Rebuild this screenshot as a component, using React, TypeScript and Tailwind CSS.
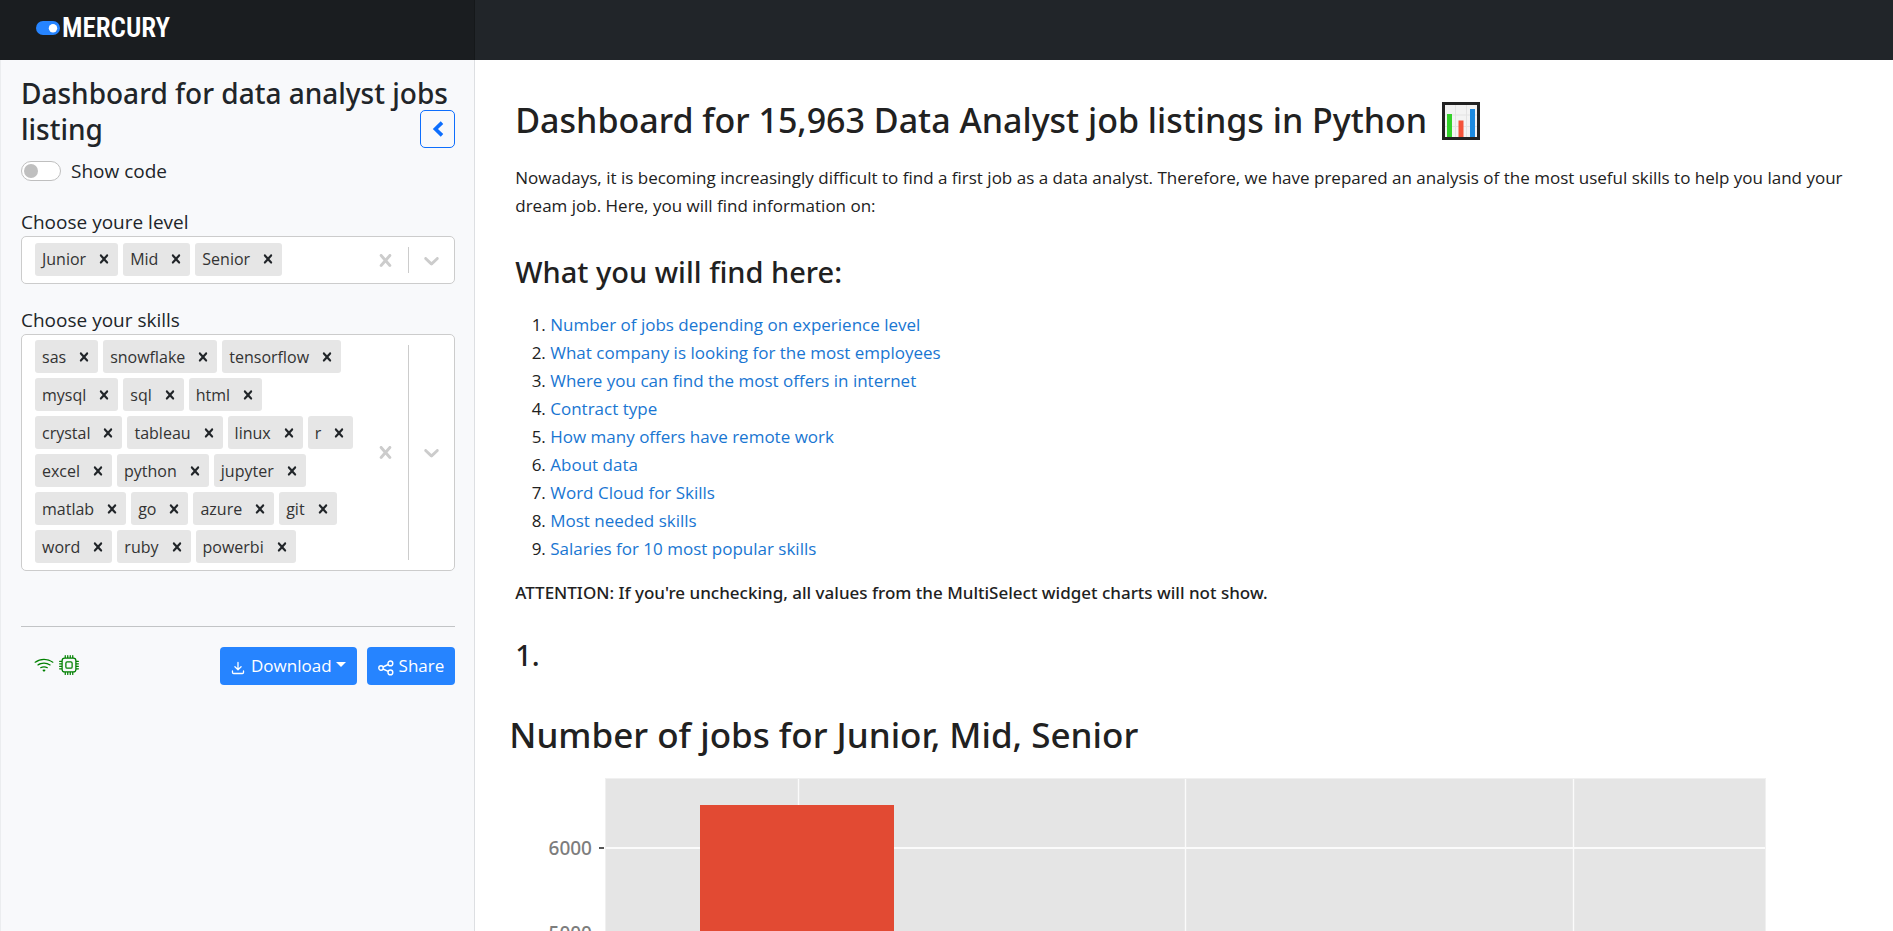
import { useState } from "react";
import { BsCpu, BsWifi } from "react-icons/bs";

const LEVELS = ["Junior", "Mid", "Senior"];

const SKILLS = [
  "sas", "snowflake", "tensorflow", "mysql", "sql", "html", "crystal",
  "tableau", "linux", "r", "excel", "python", "jupyter", "matlab", "go",
  "azure", "git", "word", "ruby", "powerbi",
];

const CONTENTS = [
  "Number of jobs depending on experience level",
  "What company is looking for the most employees",
  "Where you can find the most offers in internet",
  "Contract type",
  "How many offers have remote work",
  "About data",
  "Word Cloud for Skills",
  "Most needed skills",
  "Salaries for 10 most popular skills",
];

function CrossIcon({ className }: { className: string }) {
  return (
    <svg viewBox="0 0 20 20" className={className} fill="currentColor" aria-hidden="true">
      <path d="M14.348 14.849c-0.469 0.469-1.229 0.469-1.697 0l-2.651-3.030-2.651 3.029c-0.469 0.469-1.229 0.469-1.697 0-0.469-0.469-0.469-1.229 0-1.697l2.758-3.15-2.759-3.152c-0.469-0.469-0.469-1.228 0-1.697s1.228-0.469 1.697 0l2.652 3.031 2.651-3.031c0.469-0.469 1.228-0.469 1.697 0s0.469 1.229 0 1.697l-2.758 3.152 2.758 3.15c0.469 0.469 0.469 1.229 0 1.698z" />
    </svg>
  );
}

function DownIcon() {
  return (
    <svg viewBox="0 0 20 20" className="size-[25px]" fill="currentColor" aria-hidden="true">
      <path d="M4.516 7.548c0.436-0.446 1.043-0.481 1.576 0l3.908 3.747 3.908-3.747c0.533-0.481 1.141-0.446 1.574 0 0.436 0.445 0.408 1.197 0 1.615-0.406 0.418-4.695 4.502-4.695 4.502-0.217 0.223-0.502 0.335-0.787 0.335s-0.57-0.112-0.789-0.335c0 0-4.287-4.084-4.695-4.502s-0.436-1.17 0-1.615z" />
    </svg>
  );
}

function MultiSelect({ id, label, initial }: { id: string; label: string; initial: string[] }) {
  const [values, setValues] = useState(initial);
  return (
    <div>
      <label htmlFor={id} className="block text-[19px] leading-7">{label}</label>
      <div className="flex min-h-12 rounded-[5px] border border-[#cccccc] bg-white">
        <ul className="flex flex-1 flex-wrap content-center gap-[5px] pt-[5px] pr-[10px] pb-[7px] pl-[13px]">
          {values.map((v) => (
            <li key={v} className="flex h-[33px] items-center rounded-[3px] bg-[#e6e6e6] pl-[7px] text-[#333333]">
              <span className="pr-1 text-[16px] leading-6">{v}</span>
              <button
                type="button"
                aria-label={`Remove ${v}`}
                onClick={() => setValues(values.filter((x) => x !== v))}
                className="flex h-full w-7 items-center justify-center text-[#212529]"
              >
                <CrossIcon className="size-[18px]" />
              </button>
            </li>
          ))}
        </ul>
        <button
          type="button"
          aria-label={`Clear: ${label}`}
          onClick={() => setValues([])}
          className="flex w-[45px] shrink-0 items-center justify-center text-[#cccccc]"
        >
          <CrossIcon className="size-[25px]" />
        </button>
        <span className="my-[10px] w-px shrink-0 bg-[#cccccc]" />
        <button id={id} type="button" className="flex w-[45px] shrink-0 items-center justify-center text-[#cccccc]">
          <DownIcon />
        </button>
      </div>
    </div>
  );
}

function Brand() {
  return (
    <a href="#home" aria-label="Mercury" className="flex items-center gap-[2px] pl-9">
      <svg viewBox="0 0 24 14" className="h-[14px] w-6" aria-hidden="true">
        <rect width="24" height="14" rx="7" fill="#2684ff" />
        <circle cx="17" cy="7.2" r="4.2" fill="#ffffff" />
      </svg>
      <span className="font-['Roboto_Condensed',Roboto,sans-serif] text-[27px] leading-8 font-semibold text-white">
        MERCURY
      </span>
    </a>
  );
}

function DownloadIcon() {
  return (
    <svg viewBox="0 0 15 15" className="mt-1 size-[14px]" fill="none" stroke="currentColor" strokeWidth="1.4" strokeLinecap="round" strokeLinejoin="round" aria-hidden="true">
      <path d="M7.5 1.6v7.6M4.2 6.2l3.3 3.2 3.3-3.2M1.6 10.6v1.6q0 1.2 1.2 1.2h9.4q1.2 0 1.2-1.2v-1.6" />
    </svg>
  );
}

function ShareIcon() {
  return (
    <svg viewBox="0 0 16 16" className="mt-1 size-4" fill="none" stroke="currentColor" strokeWidth="1.4" aria-hidden="true">
      <circle cx="3" cy="8" r="2.2" />
      <circle cx="12.4" cy="3.4" r="2.4" />
      <circle cx="12.4" cy="12.4" r="2.4" />
      <path d="M5 7l5.2-2.5M5 9l5.2 2.4" />
    </svg>
  );
}

function Sidebar() {
  return (
    <aside className="box-content w-1/4 shrink-0 border-r border-l border-r-[#dddfe2] border-l-[#ebedef] bg-[#f8f9fb]">
      <div className="pt-[15px] pr-[19px] pl-5">
        <h3 className="font-['Noto_Sans',sans-serif] text-[28px] leading-9 font-medium">
          Dashboard for data analyst jobs listing
          <button
            type="button"
            aria-label="Hide sidebar"
            className="float-right -mt-px flex h-[38px] w-[35px] items-center justify-center rounded-[5px] border border-[#0d6efd] text-[#0d6efd]"
          >
            <svg viewBox="0 0 12 16" className="h-4 w-3" fill="none" stroke="currentColor" strokeWidth="3.6" aria-hidden="true">
              <path d="M10 1.6L3.4 8l6.6 6.4" />
            </svg>
          </button>
        </h3>
        <div className="mt-[10px] flex items-center gap-[10px]">
          <input
            id="show-code"
            type="checkbox"
            role="switch"
            className="flex h-5 w-10 appearance-none items-center rounded-full border border-[#bfbfbf] bg-white px-[2px] before:size-[14px] before:rounded-full before:bg-[#bfbfbf] checked:justify-end"
          />
          <label htmlFor="show-code" className="text-[19px] leading-7">Show code</label>
        </div>
        <div className="mt-[23px] flex flex-col gap-[22px]">
          <MultiSelect id="level" label="Choose youre level" initial={LEVELS} />
          <MultiSelect id="skills" label="Choose your skills" initial={SKILLS} />
        </div>
        <hr className="mt-[55px] border-[#c2c4c6]" />
        <div className="mt-5 flex items-center">
          <div className="flex flex-1 gap-[5px] pb-[2px] pl-[13px] text-[#008000]">
            <BsWifi className="size-5" />
            <BsCpu className="size-5" />
          </div>
          <div className="flex gap-[10px] text-[17px] text-white">
            <button type="button" className="flex h-[38px] items-center rounded bg-[#2684ff] px-[11px]">
              <DownloadIcon />
              <span className="pl-[6px]">Download</span>
              <svg viewBox="0 0 10 5" className="mb-1 ml-1 h-[5px] w-[10px]" fill="currentColor" aria-hidden="true">
                <path d="M0 0h10L5 5z" />
              </svg>
            </button>
            <button type="button" className="flex h-[38px] items-center rounded bg-[#2684ff] px-[11px]">
              <ShareIcon />
              <span className="pl-[5px]">Share</span>
            </button>
          </div>
        </div>
      </div>
    </aside>
  );
}

function ChartEmoji() {
  return (
    <svg viewBox="0 0 38 38" className="ml-[15px] inline-block size-[38px] align-[-7px]" role="img" aria-label="bar chart">
      <rect x="1.5" y="1.5" width="35" height="35" fill="#f3f3f3" stroke="#222222" strokeWidth="3" />
      <path d="M13.5 3v32M24.5 3v32M3 13h32M3 24.5h32" stroke="#e3e3e3" strokeWidth="1" />
      <rect x="5" y="12" width="5" height="23" fill="#33d12a" />
      <rect x="16.5" y="18.5" width="5" height="16.5" fill="#f4533a" />
      <rect x="28" y="7" width="5" height="28" fill="#1c8ae0" />
    </svg>
  );
}

function JobsChart() {
  const ticks = [6000, 5000, 4000, 3000];
  return (
    <svg viewBox="0 0 1260 400" className="mt-[19px] w-[1260px] max-w-full" role="img" aria-label="Number of jobs by level">
      <rect x="96" y="0" width="1161" height="400" fill="#e5e5e5" />
      <g stroke="#fbfbfb">
        <path d="M289.5 0v400M676.5 0v400M1064.5 0v400" strokeWidth="1.4" />
        {ticks.map((t, i) => (
          <path key={t} d={`M96 ${70 + i * 85}h1161`} strokeWidth="1.8" />
        ))}
      </g>
      <rect x="96.5" y="0.5" width="1160" height="420" fill="none" stroke="#f0f0f0" />
      <rect x="191" y="27" width="194" height="373" fill="#e24a33" />
      {ticks.map((t, i) => (
        <g key={t}>
          <path d={`M90 ${70 + i * 85}h5`} stroke="#555555" strokeWidth="2" />
          <text x="83" y={77 + i * 85} textAnchor="end" fill="#7d7d7d" className="font-['Noto_Sans',sans-serif] text-[19px] font-medium">
            {t}
          </text>
        </g>
      ))}
    </svg>
  );
}

export default function App() {
  return (
    <div className="flex h-screen flex-col bg-white font-['Open_Sans',sans-serif] text-[#212529]">
      <header className="flex h-[60px] shrink-0 bg-[#212529]">
        <div className="box-content flex w-1/4 shrink-0 border-r border-[#15181a] bg-[#1a1d20] pr-px">
          <div className="flex pb-1">
            <Brand />
          </div>
        </div>
      </header>
      <div className="flex min-h-0 flex-1">
        <Sidebar />
        <main className="min-w-0 flex-1 overflow-y-auto text-[17px] leading-7 [scrollbar-width:none]">
          <section className="pt-9 pr-7 pl-10 text-[#212121]">
            <h1 className="font-['Noto_Sans',sans-serif] text-[34px] leading-[48px] font-medium">
              Dashboard for 15,963 Data Analyst job listings in Python
              <ChartEmoji />
            </h1>
            <p className="mt-5">
              Nowadays, it is becoming increasingly difficult to find a first job as a data analyst. Therefore, we have
              prepared an analysis of the most useful skills to help you land your dream job. Here, you will find
              information on:
            </p>
            <h2 className="mt-[34px] font-['Noto_Sans',sans-serif] text-[29px] leading-9 font-medium">
              What you will find here:
            </h2>
            <ol className="mt-[21px] list-decimal pl-[35px]">
              {CONTENTS.map((c, i) => (
                <li key={c}>
                  <a href={`#section-${i + 1}`} className="text-[#1976d2]">{c}</a>
                </li>
              ))}
            </ol>
            <p className="mt-4 font-['Noto_Sans',sans-serif] font-medium">
              ATTENTION: If you're unchecking, all values from the MultiSelect widget charts will not show.
            </p>
            <h2 id="section-1" className="mt-[30px] font-['Noto_Sans',sans-serif] text-[29px] leading-9 font-medium">
              1.
            </h2>
          </section>
          <section className="pt-[38px] pr-7 pl-[34px] text-[#212121]">
            <h1 className="font-['Noto_Sans',sans-serif] text-[35px] leading-[48px] font-medium">
              Number of jobs for Junior, Mid, Senior
            </h1>
            <JobsChart />
          </section>
        </main>
      </div>
    </div>
  );
}
